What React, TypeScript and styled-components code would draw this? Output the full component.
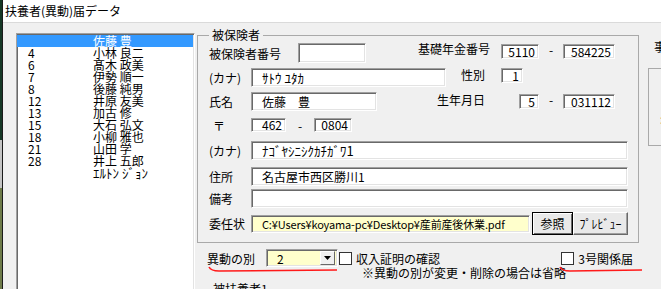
import styled, { createGlobalStyle, css } from "styled-components";

const GlobalStyle = createGlobalStyle`
  html, body {
    margin: 0;
    padding: 0;
  }
  body {
    background: #f0f0f0;
    font-family: "Noto Sans CJK JP", "Noto Sans", sans-serif;
    font-size: 12px;
    color: #000;
    overflow: hidden;
  }
`;

const sunken = css`
  box-sizing: border-box;
  border: 1px solid;
  border-color: #a0a0a0 #ffffff #ffffff #a0a0a0;
  box-shadow: inset 1px 1px 0 #696969, inset -1px -1px 0 #e3e3e3;
`;

const Screen = styled.div`
  position: relative;
  display: flex;
  width: 661px;
  height: 289px;
  overflow: hidden;
`;

const DesktopEdge = styled.div`
  flex: none;
  width: 2px;
  background: linear-gradient(#163826 0 140px, #c4c4c4 140px 188px, #6e7b4a 188px);
  border-right: 1px solid #1b1b1b;
`;

const Window = styled.div`
  flex: 1;
  display: flex;
  flex-direction: column;
  min-width: 0;
`;

const TitleBar = styled.div`
  flex: none;
  height: 22px;
  line-height: 22px;
  padding-left: 2px;
  background: #ffffff;
  border-bottom: 1px solid #dadada;
  white-space: nowrap;
`;

const Body = styled.div`
  flex: 1;
  display: flex;
  min-height: 0;
`;

const ListColumn = styled.div`
  flex: none;
  padding: 10px 0 0 13px;
`;

const ListBox = styled.div`
  ${sunken};
  width: 179px;
  height: 280px;
  padding-top: 1px;
  background: #ffffff;
`;

const ListItem = styled.div<{ $selected?: boolean }>`
  display: grid;
  grid-template-columns: 65px 1fr;
  height: 12px;
  line-height: 12px;
  padding-left: 11px;
  margin-right: 1px;
  white-space: nowrap;
  background: ${({ $selected }) => ($selected ? "#3399ff" : "transparent")};
  color: ${({ $selected }) => ($selected ? "#ffffff" : "#000000")};
`;

/* half-width katakana is drawn a little larger so it keeps the form's widths */
const HalfKana = styled.span`
  font-size: 13px;
`;

const CenterColumn = styled.div`
  flex: none;
  width: 442px;
  margin-left: 2px;
`;

const GroupBox = styled.fieldset`
  margin: 5px 0 0;
  padding: 0 10px 7px 11px;
  border: 1px solid #a9a9a9;
  min-width: 0;
`;

const Legend = styled.legend`
  padding: 0 3px;
  line-height: 14px;
`;

const FormRow = styled.div<{ $top: number; $h: number }>`
  display: flex;
  align-items: center;
  height: ${({ $h }) => $h}px;
  margin-top: ${({ $top }) => $top}px;
  white-space: nowrap;
`;

const Label = styled.div<{ $w?: number; $pl?: number }>`
  flex: none;
  width: ${({ $w }) => $w ?? 42}px;
  padding-left: ${({ $pl }) => $pl ?? 0}px;
  box-sizing: border-box;
`;

const Field = styled.div<{ $w?: number; $h: number; $yellow?: boolean; $tight?: boolean }>`
  ${sunken};
  display: flex;
  align-items: center;
  flex: ${({ $w }) => ($w ? "none" : "1")};
  width: ${({ $w }) => ($w ? `${$w}px` : "auto")};
  height: ${({ $h }) => $h}px;
  padding-left: 10px;
  background: ${({ $yellow }) => ($yellow ? "#ffffcc" : "#ffffff")};
  font-size: ${({ $tight }) => ($tight ? "11px" : "12px")};
  letter-spacing: ${({ $tight }) => ($tight ? "-0.15px" : "0")};
  overflow: hidden;
`;

const NumBox = styled.div<{ $w: number; $h?: number; $align?: string }>`
  ${sunken};
  width: ${({ $w }) => $w}px;
  height: ${({ $h }) => $h ?? 15}px;
  line-height: ${({ $h }) => ($h ?? 15) - 2}px;
  padding-right: 3px;
  text-align: right;
  background: #ffffff;
  justify-self: ${({ $align }) => $align ?? "start"};
`;

const Dash = styled.div<{ $w: number }>`
  flex: none;
  width: ${({ $w }) => $w}px;
  text-align: center;
`;

const Cluster = styled.div<{ $mt: number }>`
  display: grid;
  grid-template-columns: 51px 38px 24px 52px;
  align-items: start;
  align-self: flex-start;
  margin: ${({ $mt }) => $mt}px 13px 0 auto;
`;

/* long captions run out to the left of their column, as in the form */
const ClusterText = styled.div<{ $pr: number; $mt?: number }>`
  display: flex;
  justify-content: flex-end;
  line-height: 12px;
  padding-right: ${({ $pr }) => $pr}px;
  margin-top: ${({ $mt }) => $mt ?? 0}px;
  white-space: nowrap;
`;

const ClusterDash = styled.div`
  text-align: center;
  line-height: 12px;
`;

const Button = styled.div<{ $w: number; $default?: boolean }>`
  box-sizing: border-box;
  flex: none;
  display: flex;
  align-items: center;
  justify-content: center;
  width: ${({ $w }) => $w}px;
  height: 23px;
  margin-left: ${({ $default }) => ($default ? "2px" : "0")};
  background: #e9e9e9;
  border: 1px solid;
  border-color: ${({ $default }) => ($default ? "#000000" : "#ffffff #696969 #696969 #ffffff")};
  box-shadow: ${({ $default }) =>
    $default
      ? "inset 1px 1px 0 #ffffff, inset -1px -1px 0 #696969"
      : "inset -1px -1px 0 #a0a0a0"};
`;

const BottomRow = styled.div`
  display: flex;
  align-items: center;
  height: 18px;
  margin-top: 6px;
  padding: 0 6px 0 10px;
  white-space: nowrap;
`;

const Combo = styled.div`
  ${sunken};
  display: flex;
  align-items: center;
  width: 72px;
  height: 18px;
  padding: 0 2px 0 10px;
  background: #ffffcc;
`;

const ComboValue = styled.span`
  flex: 1;
`;

const DropButton = styled.div`
  box-sizing: border-box;
  display: flex;
  align-items: center;
  justify-content: center;
  width: 15px;
  height: 14px;
  background: #f0f0f0;
  border: 1px solid;
  border-color: #ffffff #696969 #696969 #ffffff;
`;

const Check = styled.div<{ $auto?: boolean }>`
  box-sizing: border-box;
  flex: none;
  width: 13px;
  height: 13px;
  margin-left: ${({ $auto }) => ($auto ? "auto" : "1px")};
  background: #ffffff;
  border: 1px solid #333333;
`;

const CheckText = styled.span`
  margin-left: 4px;
`;

const Note = styled.div`
  margin-top: -1px;
  padding-left: 165px;
  line-height: 14px;
  white-space: nowrap;
`;

const SubGroupTitle = styled.div`
  margin-top: 2px;
  padding-left: 16px;
  line-height: 14px;
`;

const RightColumn = styled.div`
  flex: none;
  width: 40px;
  margin-left: 9px;
`;

const RightLabel = styled.div`
  margin-top: 17px;
  padding-left: 6px;
  line-height: 14px;
`;

const RightBox = styled.div`
  height: 76px;
  margin-top: 14px;
  padding-left: 11px;
  border: 1px solid #a9a9a9;
  border-right: none;
`;

const RightColon = styled.div`
  margin-top: 43px;
  line-height: 14px;
`;

const Marks = styled.svg`
  position: absolute;
  left: 0;
  top: 0;
  pointer-events: none;
`;

const people = [
  { no: "", name: "佐藤 豊", selected: true },
  { no: "4", name: "小林 良二" },
  { no: "6", name: "髙木 政美" },
  { no: "7", name: "伊勢 順一" },
  { no: "8", name: "後藤 純男" },
  { no: "12", name: "井原 友美" },
  { no: "13", name: "加古 修" },
  { no: "15", name: "大石 弘文" },
  { no: "18", name: "小柳 雅也" },
  { no: "21", name: "山田 学" },
  { no: "28", name: "井上 五郎" },
  { no: "", name: "ｴﾙﾄﾝ ｼﾞｮﾝ", kana: true },
];

export default function App() {
  return (
    <>
      <GlobalStyle />
      <Screen>
        <DesktopEdge />
        <Window>
          <TitleBar>扶養者(異動)届データ</TitleBar>
          <Body>
            <ListColumn>
              <ListBox>
                {people.map((p, i) => (
                  <ListItem key={i} $selected={p.selected}>
                    <span>{p.no}</span>
                    {p.kana ? <HalfKana>{p.name}</HalfKana> : <span>{p.name}</span>}
                  </ListItem>
                ))}
              </ListBox>
            </ListColumn>

            <CenterColumn>
              <GroupBox>
                <Legend>被保険者</Legend>
                <FormRow $top={1} $h={20}>
                  <Label $w={89}>被保険者番号</Label>
                  <Field $w={68} $h={20} />
                  <Cluster $mt={1}>
                    <ClusterText $pr={11} $mt={-1}>基礎年金番号</ClusterText>
                    <NumBox $w={38}>5110</NumBox>
                    <ClusterDash>-</ClusterDash>
                    <NumBox $w={52}>584225</NumBox>
                  </Cluster>
                </FormRow>
                <FormRow $top={5} $h={19}>
                  <Label>(カナ)</Label>
                  <Field $w={195} $h={19}>
                    <HalfKana>ｻﾄｳ ﾕﾀｶ</HalfKana>
                  </Field>
                  <Cluster $mt={0}>
                    <ClusterText $pr={16} $mt={1}>性別</ClusterText>
                    <NumBox $w={22}>1</NumBox>
                  </Cluster>
                </FormRow>
                <FormRow $top={5} $h={19}>
                  <Label>氏名</Label>
                  <Field $w={126} $h={19}>佐藤　豊</Field>
                  <Cluster $mt={2}>
                    <ClusterText $pr={16}>生年月日</ClusterText>
                    <NumBox $w={20} $align="end">5</NumBox>
                    <ClusterDash>-</ClusterDash>
                    <NumBox $w={52}>031112</NumBox>
                  </Cluster>
                </FormRow>
                <FormRow $top={7} $h={14}>
                  <Label $pl={4}>〒</Label>
                  <NumBox $w={35} $h={14}>462</NumBox>
                  <Dash $w={28}>-</Dash>
                  <NumBox $w={38} $h={14}>0804</NumBox>
                </FormRow>
                <FormRow $top={9} $h={19}>
                  <Label>(カナ)</Label>
                  <Field $h={19}>
                    <HalfKana>ﾅｺﾞﾔｼﾆｼｸｶﾁｶﾞﾜ1</HalfKana>
                  </Field>
                </FormRow>
                <FormRow $top={7} $h={19}>
                  <Label>住所</Label>
                  <Field $h={19}>名古屋市西区勝川1</Field>
                </FormRow>
                <FormRow $top={3} $h={19}>
                  <Label>備考</Label>
                  <Field $h={19} />
                </FormRow>
                <FormRow $top={4} $h={23}>
                  <Label>委任状</Label>
                  <Field $w={279} $h={18} $yellow $tight>
                    C:¥Users¥koyama-pc¥Desktop¥産前産後休業.pdf
                  </Field>
                  <Button $w={41} $default>参照</Button>
                  <Button $w={55}>ﾌﾟﾚﾋﾞｭｰ</Button>
                </FormRow>
              </GroupBox>

              <BottomRow>
                <Label $w={59}>異動の別</Label>
                <Combo>
                  <ComboValue>2</ComboValue>
                  <DropButton>
                    <svg width="7" height="4" viewBox="0 0 7 4">
                      <path d="M0 0h7L3.5 4z" fill="#000" />
                    </svg>
                  </DropButton>
                </Combo>
                <Check />
                <CheckText>収入証明の確認</CheckText>
                <Check $auto />
                <CheckText>3号関係届</CheckText>
              </BottomRow>
              <Note>※異動の別が変更・削除の場合は省略</Note>
              <SubGroupTitle>被扶養者1</SubGroupTitle>
            </CenterColumn>

            <RightColumn>
              <RightLabel>事</RightLabel>
              <RightBox>
                <RightColon>:</RightColon>
              </RightBox>
            </RightColumn>
          </Body>
        </Window>

        <Marks width="661" height="289" viewBox="0 0 661 289">
          <path
            d="M209 267 Q211 271 219 271 L337 270"
            stroke="#ff1a1a"
            strokeWidth="1.6"
            fill="none"
          />
          <path
            d="M560 267 Q562 271 570 271 L642 270"
            stroke="#ff1a1a"
            strokeWidth="1.6"
            fill="none"
          />
        </Marks>
      </Screen>
    </>
  );
}
